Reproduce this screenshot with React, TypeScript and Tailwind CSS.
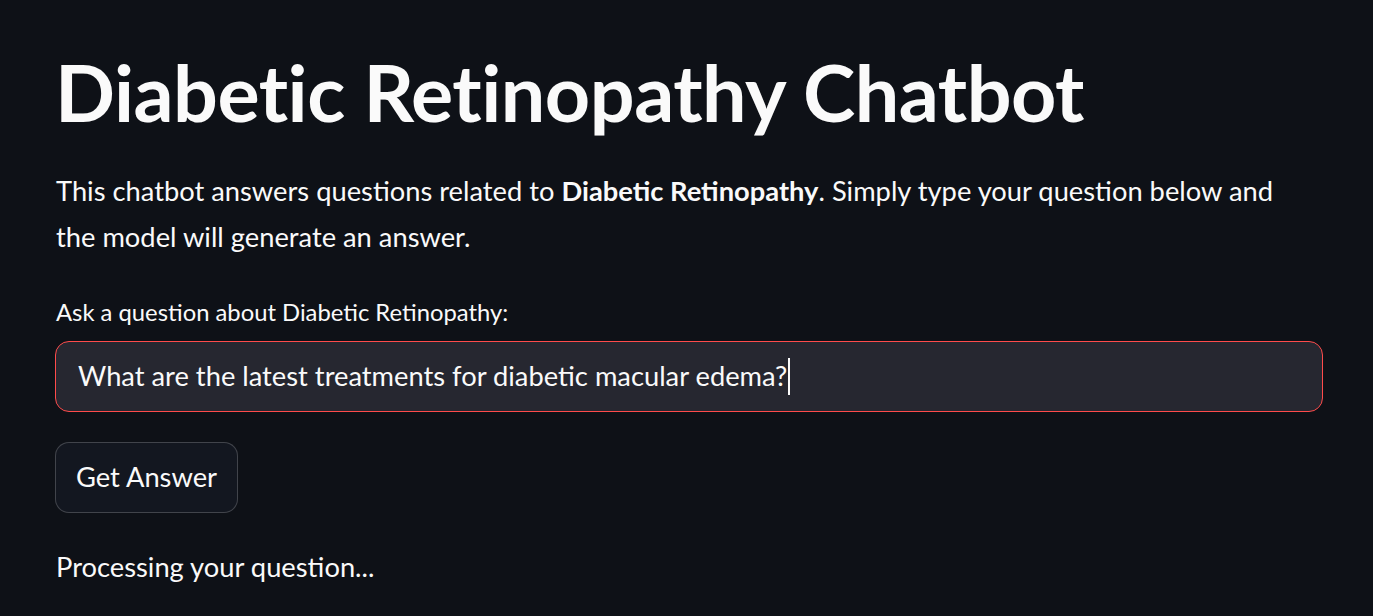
export default function App() {
  return (
    <div className="min-h-screen w-full bg-[#0e1117] text-[#fafafa] font-['Lato',sans-serif]">
      <div className="pl-[55px] pr-[50px] pt-[44px]">
        {/* Title */}
        <h1 className="text-[79px] font-bold leading-[96px] tracking-[-0.5px]">
          Diabetic Retinopathy Chatbot
        </h1>

        {/* Description */}
        <p className="mt-[28px] max-w-[1240px] pl-px text-[27.3px] leading-[46px]">
          This chatbot answers questions related to <strong className="font-bold">Diabetic Retinopathy</strong>. Simply type your question below and the model will generate an answer.
        </p>

        {/* Input */}
        <label className="mt-[32px] block pl-px text-[23.8px] leading-[40px]">
          Ask a question about Diabetic Retinopathy:
        </label>
        <div className="mt-[9px] flex h-[71px] w-full items-center rounded-[14px] border border-[#ff4b4b] bg-[#262730] px-[22px]">
          <span className="text-[27.3px]">What are the latest treatments for diabetic macular edema?</span>
          <span className="ml-[1px] h-[37px] w-[2px] bg-[#fafafa]" />
        </div>

        {/* Button */}
        <button className="mt-[30px] flex h-[71px] items-center rounded-[14px] border border-[#fafafa]/20 bg-[#131720] px-[20px] text-[27.3px]">
          Get Answer
        </button>

        <p className="mt-[31px] pl-px text-[27.3px] leading-[46px]">Processing your question...</p>
      </div>
    </div>
  );
}
